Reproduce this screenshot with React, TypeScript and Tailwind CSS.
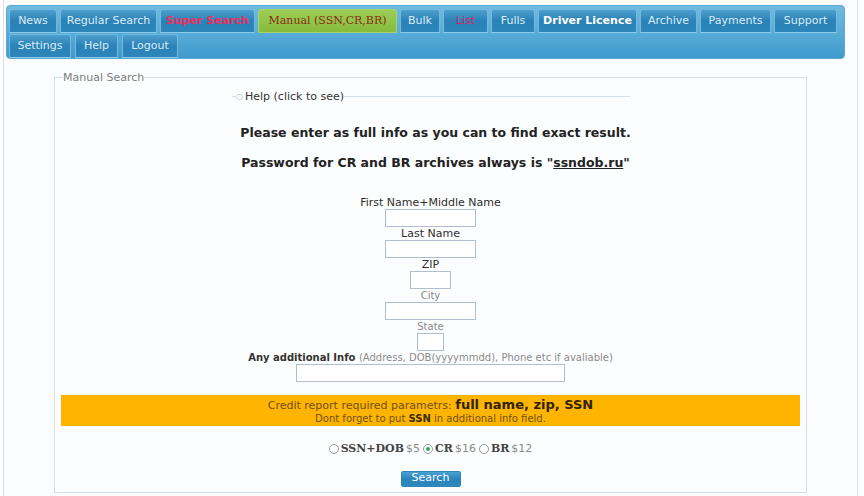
import React from "react";

type Tab = { label: string; w: string; cls?: string };

const row1: Tab[] = [
  { label: "News", w: "w-[48px]" },
  { label: "Regular Search", w: "w-[97px]" },
  { label: "Super Search", w: "w-[95px]", cls: "text-[#ee2f5c] font-bold" },
  { label: "Manual (SSN,CR,BR)", w: "w-[139px]", cls: "manual" },
  { label: "Bulk", w: "w-[40px]" },
  { label: "List", w: "w-[45px]", cls: "text-[#d8245a]" },
  { label: "Fulls", w: "w-[44px]" },
  { label: "Driver Licence", w: "w-[99px]", cls: "font-bold text-white" },
  { label: "Archive", w: "w-[57px]" },
  { label: "Payments", w: "w-[71px]" },
  { label: "Support", w: "w-[63px]" },
];

const row2: Tab[] = [
  { label: "Settings", w: "w-[62px]" },
  { label: "Help", w: "w-[43px]" },
  { label: "Logout", w: "w-[56px]" },
];

function NavTab({ tab, h }: { tab: Tab; h: string }) {
  if (tab.cls === "manual") {
    return (
      <div
        className={`${tab.w} ${h} flex items-center justify-center rounded-t-[3px] border border-[#a6d36a] bg-gradient-to-b from-[#9ccd55] to-[#86bb3e] text-[11px] text-[#8a2c12] [font-family:'DejaVu_Serif',serif]`}
      >
        {tab.label}
      </div>
    );
  }
  return (
    <div
      className={`${tab.w} ${h} flex items-center justify-center rounded-t-[3px] border border-[#72b9de] border-b-[#8fcbe8] bg-gradient-to-b from-[#4c9fcd] via-[#2a82b7] to-[#2d86ba] text-[11px] ${tab.cls ?? "text-[#dcecf6]"}`}
    >
      {tab.label}
    </div>
  );
}

function Field({ label, w, gray }: { label: React.ReactNode; w: string; gray?: boolean }) {
  return (
    <>
      <div className={`h-[13px] leading-[13px] ${gray ? "text-[10px] text-[#8a8a8a]" : "text-[11px] text-[#2e2e2e]"}`}>{label}</div>
      <input className={`${w} h-[18px] border border-[#b3bdd0] bg-white`} />
    </>
  );
}

function Radio({ checked }: { checked?: boolean }) {
  return (
    <span className="inline-flex h-[10px] w-[10px] items-center justify-center rounded-full border border-[#8f9aa6] bg-white align-[-1px]">
      {checked && <span className="h-[4px] w-[4px] rounded-full bg-[#3fa34d]" />}
    </span>
  );
}

export default function App() {
  return (
    <div className="h-[496px] w-[864px] overflow-hidden bg-white [font-family:'DejaVu_Sans',Verdana,sans-serif]">
      <div className="ml-[3px] mr-[6px] h-full border-x border-[#d5e0ea] bg-[#fafcfd] pt-[5px]">
        {/* top navigation */}
        <div className="ml-[2px] mr-[12px] h-[54px] rounded-[4px] border border-[#5aa9d4] bg-gradient-to-b from-[#6fbbe0] via-[#58acd8] to-[#3f9acc] pl-[2px] pt-[3px]">
          <div className="flex gap-[3px]">
            {row1.map((t) => (
              <NavTab key={t.label} tab={t} h="h-[24px]" />
            ))}
          </div>
          <div className="mt-[1px] flex gap-[4px]">
            {row2.map((t) => (
              <NavTab key={t.label} tab={t} h="h-[24px]" />
            ))}
          </div>
        </div>

        {/* manual search box */}
        <fieldset className="mx-auto mt-[12px] h-[422px] w-[753px] border border-[#d3dee8] bg-[#fcfdfe] px-[6px]">
          <legend className="ml-[2px] text-[11px] leading-[13px] text-[#7d7d7d]">Manual Search</legend>

          <fieldset className="ml-[171px] mt-[6px] w-[398px] border-t border-[#d6e0e8]">
            <legend className="ml-[4px] flex items-center text-[11px] leading-[13px] text-[#333]">
              <span className="mr-[2px] text-[8px] text-[#9aa4ae]">○</span>Help (click to see)
            </legend>
          </fieldset>

          <div className="mt-[22px] pl-[10px] text-center text-[12.5px] font-bold leading-[16px] text-[#222]">
            Please enter as full info as you can to find exact result.
          </div>
          <div className="mt-[14px] pl-[10px] text-center text-[12.5px] font-bold leading-[16px] text-[#222]">
            Password for CR and BR archives always is "<span className="underline">ssndob.ru</span>"
          </div>

          <div className="mt-[25px] flex flex-col items-center">
            <Field label="First Name+Middle Name" w="w-[91px]" />
            <Field label="Last Name" w="w-[91px]" />
            <Field label="ZIP" w="w-[41px]" />
            <Field label="City" w="w-[91px]" gray />
            <Field label="State" w="w-[27px]" gray />
            <Field
              label={
                <span className="text-[10px]">
                  <span className="font-bold text-[#333]">Any additional Info </span>
                  <span className="text-[#8a8a8a]">(Address, DOB(yyyymmdd), Phone etc if avaliable)</span>
                </span>
              }
              w="w-[269px]"
            />
          </div>

          <div className="mt-[13px] flex h-[31px] flex-col items-center justify-center bg-[#ffb400]">
            <div className="text-[11px] leading-[15px] text-[#6e5217]">
              Credit report required parametrs:{" "}
              <span className="text-[13px] font-bold text-[#2f2306]">full name, zip, SSN</span>
            </div>
            <div className="text-[10px] leading-[12px] text-[#6e5217]">
              Dont forget to put <span className="font-bold text-[#3a2b08]">SSN</span> in additional info field.
            </div>
          </div>

          <div className="mt-[15px] flex items-center justify-center gap-[2px] text-[11px]">
            <Radio />
            <span className="font-bold text-[#444] [font-family:'DejaVu_Serif',serif]">SSN+DOB</span>
            <span className="mr-[1px] text-[#8a8a8a]">$5</span>
            <Radio checked />
            <span className="font-bold text-[#444] [font-family:'DejaVu_Serif',serif]">CR</span>
            <span className="mr-[1px] text-[#8a8a8a]">$16</span>
            <Radio />
            <span className="font-bold text-[#444] [font-family:'DejaVu_Serif',serif]">BR</span>
            <span className="text-[#8a8a8a]">$12</span>
          </div>

          <div className="mt-[13px] flex justify-center">
            <button className="flex h-[16px] w-[60px] items-center justify-center rounded-[2px] border border-[#2f84b8] bg-gradient-to-b from-[#4aa2d2] via-[#2a84bb] to-[#2f88bd] text-[11px] text-white">
              Search
            </button>
          </div>
        </fieldset>
      </div>
    </div>
  );
}
